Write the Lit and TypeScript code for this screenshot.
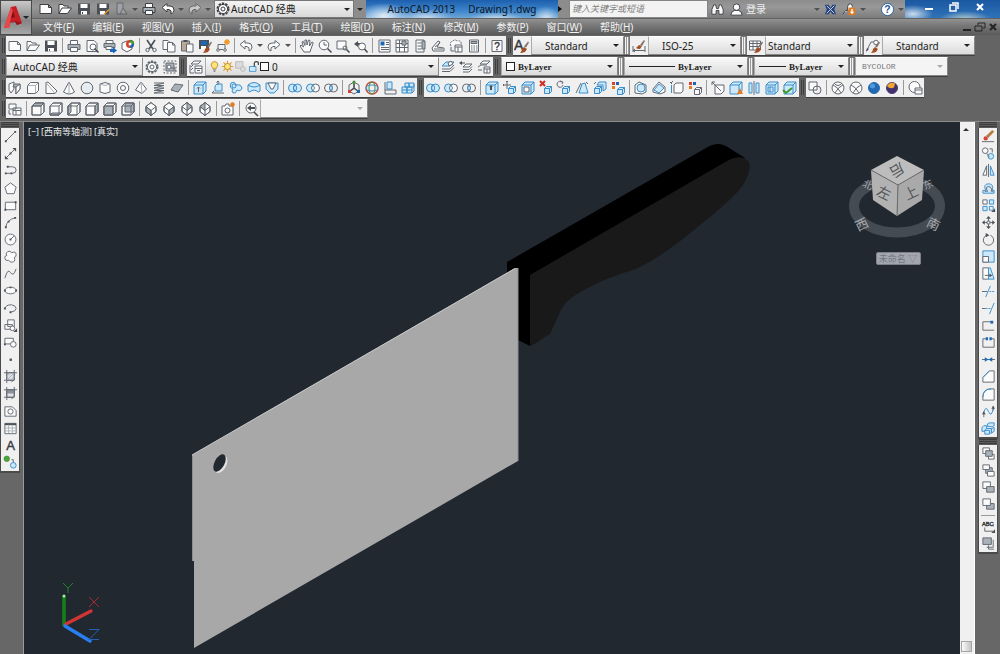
import { LitElement, html, svg, css, nothing } from "lit";
import type { SVGTemplateResult, TemplateResult } from "lit";
import { customElement } from "lit/decorators.js";

/* Shapes reused by several tool glyphs, drawn on a 16 x 16 grid. */
const miniCube = (x: number, y: number, c = "b fb") => svg`
  <g transform="translate(${x} ${y})"><path class=${c} d="M.5 2.5l2-2h5v5l-2 2h-5zM.5 2.5h5v5M5.5 2.5l2-2"/></g>`;
const bigCube = (c = "b fb") => svg`<path class=${c} d="M2 5l3-3h9v9l-3 3H2zM2 5h9v9M11 5l3-3"/>`;
const brush = svg`<path class="br" d="M8 11l2-2 3 2-2 3q-3 1-5 1 2-2 2-4z"/><path class="br2" d="M10 8.500l4-5 1 1-3 5z"/>`;
const gear = svg`<circle cx="8" cy="8" r="5.500" stroke-dasharray="2.300 1.150" stroke-width="2"/><circle class="w" cx="8" cy="8" r="4.600"/><circle cx="8" cy="8" r="2"/>`;
const dots = svg`<path class="red" d="M2 2h3v3H2z"/><path class="blu" d="M6 2h3v3H6z"/><path class="org" d="M2 6h3v3H2z"/>`;
const boxFace = (face: string) => svg`<path class="w" d="M2 5l3-3h9v9l-3 3H2z"/><path class="df" d=${face}/><path d="M2 5l3-3h9v9l-3 3H2zM2 5h9v9M11 5l3-3"/>`;
const isoFace = (face: string) => svg`<path class="w" d="M8 1.500l5 4v5l-5 4-5-4v-5z"/><path class="df" d=${face}/><path d="M8 1.500l5 4v5l-5 4-5-4v-5zM3 5.500l5 4 5-4M8 9.500v5"/>`;
const undo = svg`<path class="w" d="M2 6.500L7 2.500v2.500h3q4 0 4 4 0 3-3 4 1-4-2-4.500H7v2.500z"/>`;
const redo = svg`<path class="w" d="M14 6.500L9 2.500v2.500H6q-4 0-4 4 0 3 3 4-1-4 2-4.500h2v2.500z"/>`;
const lens = svg`<path class="th" d="M10.500 10.500l4 4"/>`;

const ICONS: Record<string, SVGTemplateResult> = {
  new: svg`<path class="w" d="M2 3.500h8.500l3 3v6H2zM10.500 3.500v3h3"/>`,
  open: svg`<path class="w" d="M2 12.500v-9h4l1 1.500h4v2M2 12.500l3-5.500h9.500l-4 5.500z"/>`,
  save: svg`<path class="dk" d="M2 2.500h12v11H2z"/><path class="wf" d="M4.500 3h7v4h-7zM5 10h6v3.500H5z"/><path d="M6.500 11v2"/>`,
  saveas: svg`<path class="dk" d="M2 2.500h12v11H2z"/><path class="wf" d="M4.500 3h7v4h-7zM5 10h5v3.500H5z"/><path class="orl" d="M9 13.500l5-5"/>`,
  plotoff: svg`<path class="df" d="M3 2h6v5l4 6H3zM9 7l-3 6"/>`,
  print: svg`<path class="w" d="M4.500 6.500v-4h7v4"/><path class="df" d="M2 6.500h12v5H2z"/><path class="w" d="M4.500 9.500h7v4h-7z"/>`,
  preview: svg`<path class="w" d="M3 2.500h7l3 3v8H3z"/><circle class="w" cx="9" cy="9" r="3"/>${lens}`,
  publish: svg`<path class="w" d="M4 5.500v-3h7v3"/><path class="df" d="M2 5.500h11v4H2z"/><path class="w" d="M4 8.500h6v3H4z"/><path class="blu" d="M8 11h3V9l4 3.500-4 3V14H8z"/>`,
  print3d: svg`<path class="w" d="M2 5l5-2 5 2v6l-5 3-5-3z"/><circle cx="10" cy="6" r="4" class="red"/><path class="grn" d="M10 2a4 4 0 0 1 4 4h-4z"/><path class="blu" d="M10 6h4a4 4 0 0 1-4 4z"/><circle class="wf" cx="10" cy="6" r="1.500"/>`,
  cut: svg`<path class="th" d="M4 2l6 9M12 2L6 11"/><circle cx="4.500" cy="12" r="1.700"/><circle cx="11.500" cy="12" r="1.700"/>`,
  copy: svg`<path class="w" d="M2 2.500h5l2 2v7H2z"/><path class="w" d="M6.500 4.500h5l2.500 2.500v7H6.500zM11.500 4.500v2.500H14"/>`,
  paste: svg`<path class="tan" d="M2.500 3h8v10h-8z"/><path class="dk" d="M4.500 2h4v2h-4z"/><path class="w" d="M7.500 6h6.500v8H7.500z"/>`,
  match: svg`<path class="dk" d="M2 2h10v9H2z"/><path class="wf" d="M4 8h5v3H4z"/><path class="blu" d="M4 3h6v4H4z"/>${brush}`,
  block: svg`<path d="M3 6.500h7v5M3 6.500v5h5"/><circle cx="3" cy="12" r="1.300" class="w"/><circle cx="10" cy="12" r="1.300" class="w"/><path class="orl" d="M12 1v6M9 4h6M10 2l4 4M14 2l-4 4"/>`,
  undo, redo,
  pan: svg`<path class="w" d="M5 14l-4-6 1-1 2.500 2L3 4l1.200-.7L6 7.500 6 2h1.500L8 7l1.500-5 1.500.5L10.500 8 13 4l1.200.8L12 11l-1 3z"/>`,
  zoom: svg`<circle class="w" cx="7" cy="7" r="4.800"/><path d="M7 4v3h3"/>${lens}`,
  zoomwin: svg`<path class="w" d="M2 3h9v8H2z"/><circle cx="10" cy="10" r="2"/><path class="th" d="M11.500 11.500l3 3"/>`,
  zoomprev: svg`<path class="dk" d="M1 6l4-3v2h3v2H5v2z"/><circle class="w" cx="9" cy="8.500" r="3.500"/><path class="th" d="M11.500 11l3 3.500"/>`,
  props: svg`<path class="w" d="M3 2h11v12H3z"/><path class="blu" d="M4.500 3.500h4v4h-4z"/><path d="M10 4.500h3M10 6.500h3M5 9.500h8M5 11.500h8"/>`,
  center: svg`<path class="w" d="M2 2h12v12H2z"/><path d="M5.500 2v12M10.500 2v12M2 5.500h12M2 9.500h12"/><path class="df" d="M8 3h4v4H8z"/>`,
  palette: svg`<path class="w" d="M4 2h8v12H4z"/><path class="df" d="M10 3h3v8h-3z"/><path d="M5.500 5h4M5.500 8h4M5.500 11h4"/>`,
  sheets: svg`<path class="w" d="M2 10l6-7 2 1-3 5 7 1v3H3z"/><path d="M4 11h9M5 9l5-4"/>`,
  markup: svg`<path class="w" stroke-dasharray="2 1" d="M3 8q-2-4 2-5 2-2 4 0 5-1 4 4"/><path class="w" d="M7 7h7v7H7z"/><path d="M7 9h7M10 9v5M3 9v4h3"/>`,
  calc: svg`<path class="w" d="M3.500 2h9v12h-9z"/><path class="df" d="M5 3.500h6v2H5z"/><path stroke-dasharray="1.500 1" d="M5 8h6.500M5 10h6.500M5 12h6.500"/>`,
  help: svg`<path class="w" d="M3 2.500h10v11H3z"/><text class="t" x="8" y="12" text-anchor="middle">?</text>`,
  tstyle: svg`<text class="t" x="0" y="12" font-size="14">A</text>${brush}`,
  dstyle: svg`<path d="M2 8v6M14 8v6M2 12.500h12M2 12.500l2-1.500M2 12.500L4 14"/><path class="br" d="M6 9l2-2 3 1-2 3q-3 0-4-1z"/><path class="br2" d="M9 7l4-5 1 1-3 5z"/>`,
  tbstyle: svg`<path class="w" d="M1.500 3h11v9h-11z"/><path d="M1.500 5.500h11M5 3v9M9 3v9M1.500 8.500h11"/>${brush}`,
  mstyle: svg`<path d="M1.500 13L6 4h4"/><circle class="w" cx="11" cy="4.500" r="2.300"/><path class="dk" d="M1 14l1-4 2 1z"/>${brush}`,
  gear,
  gearbox: svg`<path class="df" d="M4 4h8v8H4z"/><path stroke-dasharray="2 1.500" d="M2 2h12v12H2z"/><circle class="w" cx="7" cy="8" r="2"/><path d="M9 9h4v4"/>`,
  layers: svg`<path class="w" d="M3 5l3-3h7l-3 3zM3 8l2-2M3 11l2-2"/><path class="w" d="M7 7h7v7H7z"/><path d="M7 9.500h7M9 11.500h3M2 6v8h4"/>`,
  laycur: svg`<path class="b fb" d="M2 7l4-4h8l-4 4z"/><path d="M2 10h8l4-4M2 12.500h8l4-4"/><path class="w" d="M8 4l3-2 2 3-4 2z"/>`,
  layprev: svg`<path class="w" d="M5 8l3-3h6l-3 3zM5 10.500h6l3-3M5 13h6l3-3"/><path class="dk" d="M1 4l3-2v1.500h3v1H4V6z"/>`,
  laystate: svg`<path class="w" d="M4 5l3-3h7l-3 3zM2 8l3-2h6M2 11h4"/><path class="w" d="M8 8h6v6H8z"/><path d="M8 10h6M11 10v4"/>`,
  poly: svg`<path class="w" d="M2 4l5-2v7l-3 4-2-3z"/><path class="df" d="M7 4h6v5l-4 5V7H6z"/><path class="w" d="M9 7l4-3v5l-4 5z"/>`,
  box: svg`<path class="w" d="M2.500 5.500l3-3h8v8l-3 3h-8z"/><path class="ln" d="M2.500 5.500h8v8M10.500 5.500l3-3"/>`,
  wedge: svg`<path class="w" d="M3 2.500l2-.5 9 9-2 2.500H3z"/><path class="ln" d="M3 2.500l9 11"/>`,
  cone: svg`<path class="w" d="M8 2l5.500 10q-5.500 4-11 0z"/><path class="ln" d="M8 2v12"/>`,
  sphere: svg`<circle class="ball" cx="8" cy="8" r="5.800"/>`,
  cyl: svg`<path class="w" d="M3 4q5-3 10 0v8q-5 3-10 0z"/><path class="ln" d="M3 4q5 3 10 0"/>`,
  torus: svg`<circle class="w" cx="8" cy="8" r="5.800"/><circle class="w" cx="8" cy="8" r="2.500"/>`,
  pyramid: svg`<path class="w" d="M8 2l5.500 7L9 13.500 2.500 10z"/><path class="ln" d="M8 2l1 11.500"/>`,
  helix: svg`<path d="M3 3h10L3 5.500h10L3 8h10L3 10.500h10L3 13h10"/>`,
  planar: svg`<path class="df" d="M6 4l8 1-5 7-7-2z"/><path class="ln" d="M4 7l8 1M10 4.500L6 11"/>`,
  extrude: svg`${bigCube()}<path d="M6.500 12V7M5 8.500L6.500 7 8 8.500"/>`,
  presspull: svg`<path class="b fb" d="M5 6l2-2h5v7H5z"/><path d="M2 13h12M4 11l-2 2M8 1v4M6.500 2.500L8 1l1.500 1.500"/>`,
  sweep: svg`<path class="b fb" d="M3 3q4-2 5 2 5-1 6 3-1 4-5 2-1 4-4 3-2-2 0-4-4-1-2-6z"/><circle class="b" cx="6" cy="6" r="2"/>`,
  revolve: svg`<path class="b fb" d="M2 5q6-5 12 0v6q-2 2-3 0-3-2-6 0-1 2-3 0z"/><path class="b" d="M2 5q6 4 12 0"/>`,
  loft: svg`<path class="b fb" d="M2 3h12v6l-4 4H6L2 9z"/><path class="w" d="M4 3h8L9 9H7z"/>`,
  union: svg`<circle class="b fb" cx="5.500" cy="8" r="4"/><circle class="b fb" cx="10.500" cy="8" r="4"/><ellipse class="b" cx="8" cy="8" rx="1.500" ry="3"/>`,
  subtract: svg`<circle class="b fb" cx="5.500" cy="8" r="4"/><circle class="w" cx="10.500" cy="8" r="4"/><path class="b" d="M8 5q3 3 0 6"/>`,
  intersect: svg`<circle cx="5.500" cy="8" r="4"/><circle cx="10.500" cy="8" r="4"/><path class="b fb" d="M8 5q3 3 0 6-3-3 0-6z"/>`,
  gizmove: svg`<path class="th" d="M8 2v6l-5 4M8 8l5 4"/><path d="M3 5l5-3 5 3v6l-5 3-5-3z"/><path class="grn" d="M7 1h2v3H7z"/><path class="red" d="M2 10h3v3H2z"/><path class="blu" d="M11 10h3v3h-3z"/>`,
  gizrot: svg`<circle cx="8" cy="8" r="6" class="rl"/><ellipse cx="8" cy="8" rx="3" ry="6" class="gl"/><ellipse cx="8" cy="8" rx="6" ry="3" class="b"/>`,
  align3d: svg`<path class="b fb" d="M5 2h5v7H5z"/><path d="M3 2v12h11v-4H3"/>`,
  array3d: svg`<path class="b fb" d="M2 7h5v6H2zM7 7h5v6H7zM5 3h4v4H5zM9 3h5v4H9z"/><path class="b" d="M2 10h10M12 13l2-2V4"/>`,
  extface: svg`${bigCube()}<path class="dk" d="M5 7l2-2 2 2H8v3H6V7z"/>`,
  moveface: svg`${miniCube(6, 6)}<path d="M5 1v8M1 5h8M4 2l1-1 1 1M2 4L1 5l1 1"/>`,
  offface: svg`<path class="b fb" d="M2 5l3-3h9v9l-3 3H2z"/><path class="w" d="M4 7h5v5H4z"/><path class="b" d="M2 5h9v9M11 5l3-3"/>`,
  delface: svg`${miniCube(6, 6)}<path class="rl2" d="M2 1l5 5M7 1L2 6"/>`,
  rotface: svg`${miniCube(6, 6)}<path d="M6 2a3 3 0 1 0 1 3M4 1l3 1-1 2"/>`,
  tapface: svg`<path class="b fb" d="M5 13L8 4l3-1 3 10z"/><path d="M2 13L7 3M12 2l2 2"/>`,
  copyface: svg`${miniCube(2, 6)}<path class="b fb" d="M5 5l2-3h7v7l-3 2V5z"/><path d="M2 4l2-2"/>`,
  colface: svg`${dots}${miniCube(7, 7)}`,
  imprint: svg`<path class="w" d="M2 5l4-3 7 3v7l-4 2-7-1z"/><circle class="b fb" cx="8" cy="8" r="4"/>`,
  shell: svg`<path class="w" d="M2 9l6-7 6 5v5l-5 2-7-2z"/><path class="b fb" d="M3 10l5-6 5 4-5 5z"/>`,
  copyedge: svg`<path class="w" d="M5 5l2-2h7v8l-2 2H5z"/><path class="b" d="M2.500 5v8"/><path d="M1 2l2 2M4 1L2 3"/>`,
  coledge: svg`${dots}${miniCube(7, 7, "w")}`,
  clean: svg`<path class="w" d="M5 5h9v6l-3 3H5z"/><path d="M2 2l9 9M2 5V2h3"/>`,
  check: svg`${bigCube()}<path class="org" d="M12 8l3 6H9z"/>`,
  separate: svg`<path class="b fb" d="M3 3h3v10H3zM10 3h3v10h-3z"/><path d="M8 1v14"/>`,
  shell2: svg`${bigCube()}<path class="b" d="M4 7h5v5H4zM6 7v5"/>`,
  valid: svg`${bigCube()}<path class="gl2" d="M1 10l3 3 6-5"/>`,
  wire2d: svg`<path class="w" d="M2 2h8v8H2z"/><circle cx="10" cy="10" r="4"/>`,
  wire3d: svg`<circle class="w" cx="8" cy="8" r="6"/><path d="M3 5q5 2 8 8M13 5q-5 2-8 8M4 3q4 5 8 0"/>`,
  hidden: svg`<circle class="w" cx="8" cy="8" r="6"/><path d="M3 5q5 2 8 8M13 5q-5 2-8 8"/>`,
  realistic: svg`<circle class="bb" cx="8" cy="8" r="5.500"/><circle class="bh" cx="6.500" cy="6" r="2.500"/>`,
  conceptual: svg`<circle class="pb" cx="8" cy="8" r="5.500"/><path class="oy" d="M3 6a5.500 5.500 0 0 1 8-2.500l-1 4q-4 2-7-1.500z"/>`,
  vsmgr: svg`<circle class="w" cx="7.500" cy="7" r="5.500"/><path class="w" d="M8 8h7v6H8z"/><path d="M8 10h7"/>`,
  named: svg`<path class="w" d="M2 3h7v5H2zM6 7h8v7H6z"/><path d="M6 9.500h8M9 9.500V14M2 9v4h2"/>`,
  vtop: boxFace("M2 5l3-3h9l-3 3z"),
  vbottom: boxFace("M2 14l2-2h9l-2 2z"),
  vleft: boxFace("M2 5l3-3v9l-3 3z"),
  vright: boxFace("M11 5l3-3v9l-3 3z"),
  vfront: boxFace("M2 5h9v9H2z"),
  vback: boxFace("M5 2h9v9H5z"),
  sw: isoFace("M3 5.500l5 4v5l-5-4z"),
  se: isoFace("M8 9.500l5-4v5l-5 4z"),
  ne: isoFace("M8 1.500l5 4-5 4z"),
  nw: isoFace("M8 1.500l-5 4 5 4z"),
  camera: svg`<path class="w" d="M2 5h3l1-2h3v2h4v9H2z"/><circle class="w" cx="7.500" cy="9.500" r="2.500"/><circle class="org" cx="12.500" cy="3.500" r="2.200"/>`,
  vpprev: svg`<circle class="w" cx="8" cy="7" r="5"/><path class="dk" d="M4 7l4-3v2h4v2H8v2z"/><path class="th" d="M11 11l4 4"/>`,
  line: svg`<path d="M3 13L13 3"/><path class="dk" d="M2 12h2v2H2zM12 2h2v2h-2z"/>`,
  xline: svg`<path d="M3 13L13 3"/><path class="dk" d="M2 14v-4l4 4zM14 2v4l-4-4zM7 7h2v2H7z"/>`,
  pline: svg`<path d="M5 4h5q4 0 4 3.500T10 11H3"/><path class="dk" d="M2 10h2v2H2zM8 10h2v2H8zM4 3h2v2H4z"/>`,
  polygon: svg`<path class="w" d="M8 2l6 4.500L11.800 13.500H4.200L2 6.500z"/>`,
  rect: svg`<path class="w" d="M2.500 4.500h11v8h-11z"/><path class="dk" d="M1.500 11.500h2v2h-2zM12.500 3.500h2v2h-2z"/>`,
  arc: svg`<path d="M3 13Q4 5 13 3"/><path class="dk" d="M2 12h2v2H2zM12 2h2v2h-2zM5 6h2v2H5z"/>`,
  circle: svg`<circle class="w" cx="8" cy="8" r="5.800"/><path d="M8 8l4-4"/><path class="dk" d="M7 7h2v2H7z"/>`,
  cloud: svg`<path class="w" d="M5 3q3-2 4 1 5-2 5 2 0 3-2 3 2 5-3 5-2 0-3-2-4 1-4-3 0-2 2-2-2-3 1-4z"/>`,
  spline: svg`<path d="M2 13Q5 2 8 7t6-4"/>`,
  ellipse: svg`<ellipse class="w" cx="8" cy="8" rx="6" ry="3.500"/><path class="dk" d="M1 7h2v2H1zM13 7h2v2h-2zM7 4h2v1.500H7z"/>`,
  earc: svg`<path d="M2 8q1-4 7-4 5 1 5 4 0 3-6 4"/><path class="dk" d="M1 7h2v2H1zM7 11h2v2H7z"/>`,
  insert: svg`<path class="w" d="M5 2h7v7H5zM2 7h8v5H2z"/><circle class="w" cx="10" cy="11" r="2.500"/><path class="dk" d="M15 11v4h-4z"/>`,
  mkblock: svg`<path class="w" d="M2 3.500h9v6H2z"/><circle class="w" cx="11" cy="10" r="3"/><path class="dk" d="M1 9h2v2H1z"/>`,
  point: svg`<path class="dk" d="M7 7h2.500v2.500H7z"/>`,
  hatch: svg`<path class="pale" d="M4 4h8v8H4z"/><path d="M4 1v14M12 1v10L9 14M1 4h14M1 12h10"/><path class="ln" d="M4 8l4-4M4 12l8-8M8 12l4-4"/>`,
  gradient: svg`<path class="pale" d="M4 4h8v8H4z"/><path class="dk2" d="M4 4h8v4H4z"/><path d="M4 1v14M12 1v10L9 14M1 4h14M1 12h10"/>`,
  region: svg`<path class="w" d="M2 3h8l4 4v6H2z"/><circle class="w" cx="8" cy="8" r="2.800"/>`,
  table: svg`<path class="w" d="M2 2.500h12v11H2z"/><path class="dk" d="M2 2.500h12v2H2z"/><path class="ln" d="M6 4v9M10 4v9M2 7.500h12M2 10.500h12"/>`,
  mtext: svg`<text class="t" x="8" y="13" font-size="14" text-anchor="middle">A</text>`,
  addsel: svg`<circle class="grn" cx="4" cy="4" r="3"/><circle class="b fb" cx="11" cy="11" r="3"/><path d="M9 5h2v3"/>`,
  erase: svg`<path class="tanl" d="M7 8l6-6"/><path class="w" d="M6 7l2 2"/><circle class="red" cx="5" cy="10" r="2.300"/><path d="M1 13.500h13"/>`,
  copyobj: svg`<circle class="w" cx="4.500" cy="5" r="3"/><circle class="b fb" cx="10.500" cy="11" r="3"/><path d="M9 3h3v4M6 8l3 4"/>`,
  mirror: svg`<path class="w" d="M6 3v10H2z"/><path class="b fb" d="M10 3v10h4z"/><path d="M8 1v14"/>`,
  offset: svg`<path class="b fb" d="M2 13v-3h3Q2 3 8 3t4 7h2v3z"/><path d="M4 11h3Q4 6 8 6t3 5h2"/>`,
  array: svg`<path class="w" d="M2 2h4.500v4.500H2z"/><path class="b fb" d="M9 2h4.500v4.500H9zM2 9h4.500v4.500H2z"/><path class="b" d="M9 9h4v4H9z"/><path class="dk" d="M15 11v4h-4z"/>`,
  move: svg`<path d="M8 3v10M3 8h10"/><path class="dk" d="M8 1l2.500 3h-5zM8 15l2.500-3h-5zM1 8l3-2.500v5zM15 8l-3-2.500v5z"/><path class="w" d="M6.500 6.500h3v3h-3z"/>`,
  rotate: svg`<path d="M10 3.500a5.500 5.500 0 1 1-4 0"/><path class="dk" d="M5 1l4 2.500-4 2z"/>`,
  scale: svg`<path class="b fb" d="M2 2h12v12H2z"/><path class="w" d="M2 8h6v6H2z"/>`,
  stretch: svg`<path class="w" d="M2 2h6v12H2z"/><path class="b fb" d="M8 2h2l4 12H8z"/><path d="M4 10h6"/><path class="dk" d="M9 8l3 2-3 2z"/>`,
  trim: svg`<path d="M1 8h6"/><path class="b" d="M5 14l5-12"/><path class="b" stroke-dasharray="2 1" d="M9 8h6"/>`,
  extend: svg`<path d="M1 8h4"/><path class="b" d="M9 14l5-12"/><path stroke-dasharray="2 1" class="b" d="M5 8h6"/>`,
  breakpt: svg`<path d="M13 4H2v9h12"/><path class="blu" d="M10 3h3v3h-3z"/>`,
  breakob: svg`<path d="M5 4H2v9h12V4h-3"/><path class="blu" d="M5 2.500h2.500v3H5zM9 2.500h2.500v3H9z"/>`,
  join: svg`<path d="M1 8h14"/><path class="blu" d="M4 5.500L8 8l-4 2.500zM12 5.500L8 8l4 2.500z"/>`,
  chamfer: svg`<path class="w" d="M2 14V9l7-7h5v12z"/><path class="b" d="M2 9l7-7"/>`,
  fillet: svg`<path class="w" d="M2 14v-3q0-9 9-9h3v12z"/><path class="b" d="M2 11q0-9 9-9"/>`,
  blend: svg`<path class="b" d="M3 9q2-8 5-1t5-3"/><path d="M3 14V8M13 7V2"/><path class="dk" d="M1 11l2-3 2 3zM11 5l2-3 2 3z"/>`,
  explode: svg`<path class="b fb" d="M7 3l2-1h5v3l-2 1H7zM1 7l2-2h3v4l-2 2H1zM11 8l3-1v4l-3 2z"/><path class="b fb" d="M4 10l2-2h5v4l-2 2H4zM4 10h5v4"/>`,
  front: svg`<path class="w" d="M2 2h7v6H2zM8 9h6v5H8z"/><path class="df" d="M5 5h7v6H5z"/>`,
  back: svg`<path class="df" d="M5 5h7v6H5z"/><path class="w" d="M2 2h7v5H2zM7 9h7v5H7z"/>`,
  above: svg`<path class="w" d="M2 2h8v7H2z"/><path class="df" d="M6 7h8v6H6z"/>`,
  under: svg`<path class="df" d="M6 7h8v6H6z"/><path class="w" d="M2 2h8v7H2z"/>`,
  textfront: svg`<text class="t" x="1" y="7" font-size="6">ABC</text><path d="M4 9v4h9M13 5v3"/><path class="dk" d="M15 11v4h-4z"/>`,
  hatchback: svg`<path class="df" d="M2 2h9v7H2z"/><path d="M13 4v8H6M8 10v4h6"/>`,
  bino: svg`<path class="w" d="M2 13V8l2-5h2l1 4h2l1-4h2l2 5v5H9.500V9h-3v4z"/>`,
  user: svg`<circle class="w" cx="8" cy="5.500" r="3.500"/><path class="w" d="M2 14q0-4 4-5h4q4 1 4 5z"/>`,
  exch: svg`<path class="nv" d="M2 3h4l2 3 2-3h4l-2 5 2 5h-4L8 10l-2 3H2l2-5z"/><path class="wl" d="M4 4l8 8M12 4l-8 8"/>`,
  a360: svg`<path class="w" d="M1 13l3-4h2V5q0-3 3-3 2 0 2 3"/><path class="org" d="M7 6h7v8H7z"/><path class="wf" d="M10 7.500h1.500v3H13L10.700 13 8.500 10.500H10z"/>`,
  helpq: svg`<circle class="qb" cx="8" cy="8" r="6.500"/><text class="tq" x="8" y="12" text-anchor="middle">?</text>`,
  bulb: svg`<path class="yel" d="M8 2a4 4 0 0 1 2 7.500V11H6V9.500A4 4 0 0 1 8 2z"/><path d="M6.500 12.500h3M7 14h2"/>`,
  sun: svg`<path class="orl" d="M8 1v14M1 8h14M3 3l10 10M13 3L3 13"/><circle class="yel" cx="8" cy="8" r="3.800"/>`,
  vpfrz: svg`<path class="faint" d="M2 2h9v8H2z"/><circle class="faint" cx="11" cy="11" r="3"/>`,
  lock: svg`<path class="b fb" d="M3 8h8v6H3z"/><path class="th2" d="M9 8V4q0-2 2.500-2T14 4v2"/>`,
};

type Item = string;
const DRAW: Item[] = ["line","xline","pline","polygon","rect","arc","circle","cloud","spline","ellipse","earc","insert","mkblock","point","hatch","gradient","region","table","mtext","addsel"];
const MODIFY: Item[] = ["erase","copyobj","mirror","offset","array","move","rotate","scale","stretch","trim","extend","breakpt","breakob","join","chamfer","fillet","blend","explode"];
const ORDER: Item[] = ["front","back","above","under","|","textfront","hatchback"];
const STANDARD: Item[] = ["new","open","save","|","print","preview","publish","print3d","|","cut","copy","paste","match","block","|","undo","v","redo","v","|","pan","zoom","zoomwin","zoomprev","|","props","center","palette","sheets","markup","calc","|","help"];
const MODELING: Item[] = ["poly","box","wedge","cone","sphere","cyl","torus","pyramid","helix","planar","|","extrude","presspull","sweep","revolve","loft","|","union","subtract","intersect","|","gizmove","gizrot","align3d","array3d"];
const SOLIDS: Item[] = ["union","subtract","intersect","|","extface","moveface","offface","delface","rotface","tapface","copyface","colface","|","imprint","shell","copyedge","coledge","|","clean","check","separate","shell2","valid"];
const VISUAL: Item[] = ["wire2d","|","wire3d","hidden","realistic","conceptual","|","vsmgr"];
const VIEWS: Item[] = ["named","|","vtop","vbottom","vleft","vright","vfront","vback","|","sw","se","ne","nw","|","camera","|","vpprev"];
const MENUS = [["文件","F"],["编辑","E"],["视图","V"],["插入","I"],["格式","O"],["工具","T"],["绘图","D"],["标注","N"],["修改","M"],["参数","P"],["窗口","W"],["帮助","H"]];

@customElement("app-root")
export class AppRoot extends LitElement {
  static styles = css`
    :host { display: block; font: 10px/14px "Noto Sans", "Noto Sans CJK SC", sans-serif; color: #1c1c1c; }
    * { box-sizing: border-box; }
    button, select, input { font: inherit; color: inherit; margin: 0; padding: 0; border: 0; background: none; border-radius: 0; }
    .app { display: flex; flex-direction: column; height: 100vh; background: #676767; overflow: hidden; }
    svg { display: block; }
    .ico { width: 16px; height: 16px; fill: none; stroke: #626870; stroke-width: 1; }
    .ico .w { fill: #fbfbfc; }
    .ico .df { fill: #a9b1b9; }
    .ico .pale { fill: #dfe2e5; }
    .ico .dk { fill: #4b5057; stroke: none; }
    .ico .dk2 { fill: #8a9198; stroke: none; }
    .ico .wf { fill: #fff; stroke: none; }
    .ico .b { stroke: #3a8ecb; }
    .ico .fb { fill: #cde8f8; }
    .ico .ln { stroke: #aab0b6; fill: none; }
    .ico .th { stroke: #4a4f55; stroke-width: 1.6; }
    .ico .th2 { stroke: #3f444a; stroke-width: 1.5; }
    .ico .red { fill: #d9412f; stroke: none; }
    .ico .blu { fill: #1a67b8; stroke: none; }
    .ico .grn { fill: #48a63a; stroke: #38752f; stroke-width: .5; }
    .ico .org { fill: #e57b1e; stroke: none; }
    .ico .orl { stroke: #ee9a2c; stroke-width: 1.3; }
    .ico .yel { fill: #ffe477; stroke: #ad8226; }
    .ico .br { fill: #a04f22; stroke: none; }
    .ico .br2 { fill: #84736a; stroke: none; }
    .ico .tan { fill: #b9a893; }
    .ico .tanl { stroke: #b67a3c; stroke-width: 3; }
    .ico .rl { stroke: #c9473b; stroke-width: 1.4; }
    .ico .rl2 { stroke: #cf2d22; stroke-width: 2; }
    .ico .gl { stroke: #3a9345; }
    .ico .gl2 { stroke: #3a9a2f; stroke-width: 2; }
    .ico .ball { fill: #e7ecf2; }
    .ico .bb { fill: #2069b4; stroke: #2c6ca8; }
    .ico .bh { fill: #4f9ade; stroke: none; }
    .ico .pb { fill: #443070; stroke: #4a3c6a; }
    .ico .oy { fill: #f2a72e; stroke: none; }
    .ico .nv { fill: #24437f; stroke: none; }
    .ico .wl { stroke: #c8d8f0; }
    .ico .qb { fill: #fff; stroke: #2c5e9c; }
    .ico .faint { fill: #dcdcdc; stroke: #b5b5b5; }
    .ico .t { fill: #34383d; stroke: #34383d; stroke-width: .4; font-family: "Liberation Sans", sans-serif; }
    .ico .tq { fill: #1f55a0; stroke: none; font: bold 11px "Liberation Sans", sans-serif; }

    .head { display: grid; grid-template-columns: 32px 1fr; flex: none; }
    .logo { background: linear-gradient(#c9c9c9, #858585 60%, #a7a7a7); border: 1px solid #4a4a4a; display: flex; align-items: center; }
    .logo svg { width: 22px; height: 30px; }
    .arrow { width: 0; height: 0; border: 3px solid transparent; border-top: 3px solid #222; border-bottom: 0; flex: none; }
    .arrow.side { border: 3px solid transparent; border-left: 4px solid #111; border-right: 0; }
    .arrow.dim { border-top-color: #4f4f4f; }
    .title { display: flex; height: 19px; background: linear-gradient(#8c8c8c, #989898 40%, #7c7c7c); align-items: stretch; border-bottom: 1px solid #626262; }
    .qat { display: flex; padding: 0 2px 0 4px; align-items: center; }
    .q { width: 19px; display: grid; place-items: center; flex: none; }
    .q.low { opacity: .5; }
    .qv { width: 8px; display: grid; place-items: center; }
    .title .ico { stroke: #3c3f43; }
    .work { width: 140px; display: flex; align-items: center; background: linear-gradient(#f4f4f4, #d9d9d9); border: 1px solid #777; padding-right: 3px; }
    .work select, .combo select { appearance: none; flex: 1; min-width: 0; height: 100%; outline: 0; font-family: "Noto Sans", "Noto Sans CJK SC", sans-serif; }
    .more { width: 12px; display: grid; place-items: center; background: #8c8c8c; }
    .caption { flex: 1; display: flex; justify-content: center; align-items: center; gap: 13px; color: #10151c; white-space: nowrap; overflow: hidden;
      background: radial-gradient(ellipse 26px 13px at 18px 16px, #ffffffd0, transparent), radial-gradient(ellipse 26px 9px at 60px 18px, #f4f8ffb0, transparent), radial-gradient(ellipse 28px 8px at 130px 20px, #ffffffc0, transparent), radial-gradient(ellipse 14px 12px at 180px 18px, #ffffffb0, transparent), linear-gradient(#1d5fae, #3d86cc 60%, #6ea5d6); }
    .expand { width: 11px; display: grid; place-items: center; background: #8c8c8c; }
    .search { width: 139px; background: #f3f3f3; border: 1px solid #858585; padding: 0 2px; font-style: italic; outline: 0; font-size: 9px; }
    .search::placeholder { color: #7e7e7e; opacity: 1; }
    .info { width: 197px; display: flex; align-items: center; }
    .info .ico { width: 15px; height: 15px; }
    .login { color: #eee; flex: 1; text-align: left; }
    .help { margin-left: 11px; }
    .wins { width: 95px; display: flex; justify-content: space-between; align-items: center; padding: 0 8px 4px 11px;
      background: radial-gradient(ellipse 20px 9px at 8px 14px, #ffffffc0, transparent), radial-gradient(ellipse 26px 8px at 60px 19px, #e8f0d8b0, transparent), linear-gradient(#1b58a2, #2e73b8); }
    .wins .ico, .mdi .ico { width: 12px; height: 12px; stroke: #fff; stroke-width: 2; }
    .wins button { width: 25px; display: grid; place-items: center; }
    .menubar { display: flex; align-items: center; height: 16px; background: linear-gradient(#929292, #787878 40%, #5a5a5a); padding: 0 1px 0 11px; }
    .menus { display: flex; gap: 18px; flex: 1; }
    .menus button { color: #f2f2f2; white-space: nowrap; line-height: 14px; }
    .mdi { display: flex; gap: 1px; }
    .mdi .ico { stroke: #242424; }

    .bars { display: flex; flex-direction: column; gap: 2px; padding: 1px 0 3px; flex: none; border-bottom: 1px solid #8d8d8d; background: #646464; }
    .row { display: flex; height: 19px; }
    .grip { flex: none; width: 6px; background: repeating-linear-gradient(90deg, #3f3f3f 0 1px, #636363 1px 2px); background-clip: content-box; padding: 2px 1px; }
    .grip.g7 { width: 7px; }
    .grip.g8 { width: 8px; padding: 2px; }
    .grip.light { background: repeating-linear-gradient(90deg, #f5f5f5 0 1px, #9a9a9a 1px 2px); width: 6px; background-clip: border-box; border: 1px solid #777; }
    .bar { display: flex; flex: none; background: #f0f0f0; box-shadow: 0 1px 0 #3f3f3f; }
    .tb { width: 18px; display: grid; place-items: center; flex: none; }
    .dd { width: 10px; display: grid; place-items: center; }
    .sep { width: 5px; flex: none; display: flex; justify-content: center; }
    .sep::before { content: ""; width: 1px; margin: 2px 0; background: #999; }
    .combo { display: flex; align-items: center; gap: 3px; padding: 0 4px 0 6px; background: linear-gradient(#f8f8f8, #dcdcdc); border: 1px solid #9a9a9a; border-color: #fff #888 #888 #aaa; }
    .c93 { width: 93px; } .c137 { width: 137px; } .c234 { width: 234px; } .c117 { width: 117px; } .c124 { width: 124px; } .c95 { width: 95px; } .c108 { width: 108px; }
    .combo.in { padding-left: 13px; }
    .combo.tight { padding-left: 2px; }
    .combo.off { background: #f4f4f4; color: #777; }
    .combo.off .arrow { border-top-color: #aaa; }
    .combo.serif { padding-left: 4px; }
    .combo.serif select { font: bold 9px/14px "Liberation Serif", serif; }
    .combo.mono select { font: 8px/14px "Liberation Mono", monospace; }
    .combo .ico { width: 13px; height: 13px; margin-right: -3px; flex: none; }
    .swatch { width: 9px; height: 9px; border: 1px solid #222; background: #fff; flex: none; }
    .rule { height: 1px; background: #222; flex: none; width: 46px; }
    .rule.short { width: 27px; }

    .work-area { flex: 1; display: flex; min-height: 0; }
    .side { width: 24px; flex: none; padding: 0 4px 0 1px; border-right: 1px solid #9a9a9a; }
    .vgrip { height: 6px; background: repeating-linear-gradient(#3c3c3c 0 1px, #5b5b5b 1px 2px); margin: 0; }
    .vbar { display: flex; flex-direction: column; background: #f0f0f0; box-shadow: 0 1px 0 1px #4a4a4a; }
    .draw { height: 343px; } .modify { height: 309px; margin-bottom: 2px; } .order { height: 107px; }
    .vbar .tb { flex: 1; width: auto; min-height: 0; }
    .vbar .ico { width: 15px; height: 15px; }
    .vbar .sep { width: auto; height: 5px; flex: none; align-items: center; }
    .vbar .sep::before { width: 14px; height: 1px; margin: 0; }
    .side.right { padding: 0 3px 0 4px; width: 25px; border: 0; }
    .canvas { flex: 1; position: relative; background: #212830; overflow: hidden; min-width: 0; }
    .scene { width: 100%; height: 100%; }
    .vp { position: absolute; left: 4px; top: 3px; color: #e8e8e8; display: flex; gap: 2px; font-size: 9px; }
    .cube { position: absolute; right: 9px; top: 28px; width: 106px; display: flex; flex-direction: column; align-items: center; }
    .cube svg { width: 106px; height: 92px; }
    .cube text { font-family: "Noto Sans CJK SC", sans-serif; }
    .wcs { margin-top: 10px; width: 45px; height: 13px; border: 1px solid #7d8089; border-radius: 2px; background: #a3a6ae; color: #737680; font-size: 9px; line-height: 10px; white-space: nowrap; }
    .ucs { position: absolute; left: 34px; bottom: 8px; width: 46px; height: 66px; }
    .scroll { width: 15px; flex: none; background: #f0f0f0; display: flex; flex-direction: column; justify-content: space-between; align-items: center; padding: 4px 2px 2px 0; border-right: 1px solid #fff; }
    .scroll .up { width: 12px; height: 6px; display: grid; place-items: center; }
    .scroll .arrow { border: 3px solid transparent; border-bottom: 3px solid #333; border-top: 0; }
    .thumb { width: 11px; height: 11px; background: linear-gradient(90deg, #fafafa, #c4c4c8); border: 1px solid #a5a5a5; }
  `;

  private icon(name: string): TemplateResult {
    return html`<svg class="ico" viewBox="0 0 16 16" aria-hidden="true">${ICONS[name]}</svg>`;
  }

  private items(list: Item[]) {
    return list.map((n) =>
      n === "|" ? html`<span class="sep"></span>`
      : n === "v" ? html`<button class="dd" aria-label="more"><span class="arrow dim"></span></button>`
      : html`<button class="tb" aria-label=${n}>${this.icon(n)}</button>`);
  }

  private combo(cls: string, label: string, value: string, lead: unknown = nothing) {
    return html`<label class="combo ${cls}">${lead}<select aria-label=${label}><option>${value}</option></select><span class="arrow"></span></label>`;
  }

  private quick(name: string, low = false) {
    return html`<button class="q ${low ? "low" : ""}" aria-label=${name}>${this.icon(name)}</button>`;
  }

  private header() {
    const v = html`<button class="qv" aria-label="more"><span class="arrow dim"></span></button>`;
    return html`
      <header class="head">
        <button class="logo" aria-label="application menu">
          <svg viewBox="0 0 22 30"><path d="M3 25L10 4l5-1 6 17-5 2-2-4-5 2-1 5z" fill="#c41f25"/><path d="M3 25L10 4l2 4-3 11-1 6z" fill="#e8484a"/><path d="M10 15l2-7 2 6z" fill="#801216"/><path d="M9 20l5-2 7 2-5 2-2-3z" fill="#94161b"/></svg>
          <span class="arrow"></span>
        </button>
        <div>
          <div class="title">
            <div class="qat">
              ${this.quick("new")}${this.quick("open")}${this.quick("save")}${this.quick("saveas")}${this.quick("plotoff", true)}${v}
              ${this.quick("print")}${this.quick("undo")}${v}${this.quick("redo", true)}${v}
            </div>
            <label class="work">${this.icon("gear")}<select aria-label="workspace"><option>AutoCAD 经典</option></select><span class="arrow"></span></label>
            <button class="more" aria-label="customize"><span class="arrow"></span></button>
            <div class="caption"><span>AutoCAD 2013</span><span>Drawing1.dwg</span></div>
            <button class="expand" aria-label="expand"><span class="arrow side"></span></button>
            <input class="search" aria-label="search" placeholder="键入关键字或短语" />
            <div class="info">
              ${this.quick("bino")}${this.quick("user")}<button class="login">登录</button>${v}
              ${this.quick("exch")}${this.quick("a360")}${v}
              <button class="q help" aria-label="help">${this.icon("helpq")}</button>${v}
            </div>
            <div class="wins">
              <button aria-label="minimize"><svg class="ico" viewBox="0 0 12 12"><path d="M2 8h8"/></svg></button>
              <button aria-label="restore"><svg class="ico" viewBox="0 0 12 12"><path d="M4 2h6v6M2 4h6v6H2z" stroke-width="1.500"/></svg></button>
              <button aria-label="close"><svg class="ico" viewBox="0 0 12 12"><path d="M3 3l6 6M9 3l-6 6"/></svg></button>
            </div>
          </div>
          <div class="menubar">
            <nav class="menus">${MENUS.map(([t, k]) => html`<button>${t}(<u>${k}</u>)</button>`)}</nav>
            <div class="mdi">
              <button aria-label="minimize drawing"><svg class="ico" viewBox="0 0 12 12"><path d="M2 9h8"/></svg></button>
              <button aria-label="restore drawing"><svg class="ico" viewBox="0 0 12 12"><path d="M4 4V2h7v5H9M1 5h7v5H1z" stroke-width="1"/></svg></button>
              <button aria-label="close drawing"><svg class="ico" viewBox="0 0 12 12"><path d="M3 3l6 6M9 3l-6 6"/></svg></button>
            </div>
          </div>
        </div>
      </header>`;
  }

  private bars() {
    const grip = html`<span class="grip"></span>`;
    const light = html`<span class="grip light"></span>`;
    const layerLead = html`${["bulb", "sun", "vpfrz", "lock"].map((n) => this.icon(n))}<span class="swatch"></span>`;
    return html`
      <div class="bars">
        <div class="row">
          ${grip}<div class="bar">${this.items(STANDARD)}</div><span class="grip g7"></span>
          <div class="bar">
            ${this.items(["tstyle"])}${this.combo("c93 in", "text style", "Standard")}${light}
            ${this.items(["dstyle"])}${this.combo("c93 in", "dimension style", "ISO-25")}${light}
            ${this.items(["tbstyle"])}${this.combo("c93 tight", "table style", "Standard")}${light}
            ${this.items(["mstyle"])}${this.combo("c93 in", "leader style", "Standard")}
          </div>
        </div>
        <div class="row">
          ${grip}<div class="bar">${this.combo("c137", "workspaces", "AutoCAD 经典")}${this.items(["gear", "gearbox"])}</div><span class="grip g8"></span>
          <div class="bar">${this.items(["layers"])}${this.combo("c234 tight", "layer", "0", layerLead)}${this.items(["laycur", "layprev", "laystate"])}</div><span class="grip g8"></span>
          <div class="bar">
            ${this.combo("c117 serif", "color", "ByLayer", html`<span class="swatch"></span>`)}${light}
            ${this.combo("c124 serif", "linetype", "ByLayer", html`<span class="rule"></span>`)}${light}
            ${this.combo("c95 serif", "lineweight", "ByLayer", html`<span class="rule short"></span>`)}${light}
            ${this.combo("c93 mono off", "plot style", "BYCOLOR")}
          </div>
        </div>
        <div class="row">
          ${grip}<div class="bar">${this.items(MODELING)}</div><span class="grip g7"></span>
          <div class="bar">${this.items(SOLIDS)}</div><span class="grip g7"></span>
          <div class="bar">${this.items(VISUAL)}</div>
        </div>
        <div class="row">
          ${grip}<div class="bar">${this.items(VIEWS)}${this.combo("c108 off", "view", "")}</div>
        </div>
      </div>`;
  }

  private canvas() {
    return html`
      <main class="canvas">
        <svg class="scene" viewBox="24 122 936 532" preserveAspectRatio="xMinYMin slice" role="img" aria-label="cleaver model">
          <path fill="#000" d="M507 262L706 148Q717 141 726 146L745 158 560 275 540 340 530 346 518 340V300H507z"/>
          <path fill="#191919" d="M530 275L727 161Q742 153 749 162 752 172 741 188 728 203 700 225 660 259 633 270 603 279 588 288 565 299 560 312L550 334 530 346z"/>
          <path fill="#a8a8a8" d="M192 455L515 268H518V461L194 648V561H192z"/>
          <path stroke="#c9c9c9" fill="none" d="M192 455L515 268.500"/>
          <path stroke="#8e8e8e" fill="none" d="M518 268V461M192.500 456V561"/>
          <ellipse cx="220.500" cy="464" rx="6" ry="9.500" transform="rotate(28 220.500 464)" fill="#e2e2e2"/>
          <ellipse cx="219.500" cy="463" rx="5" ry="9.500" transform="rotate(28 219.500 463)" fill="#212830"/>
        </svg>
        <div class="vp"><button>[−]</button><button>[西南等轴测]</button><button>[真实]</button></div>
        <div class="cube">
          <svg viewBox="845 150 106 92" role="img" aria-label="view cube">
            <ellipse cx="897" cy="206" rx="43" ry="26.500" fill="none" stroke="#454b53" stroke-width="10"/>
            <g fill="#a5a8ac" font-size="13">
              <text x="863" y="188" font-size="10" transform="rotate(24 867 184)">北</text>
              <text x="923" y="188" font-size="10" transform="rotate(-24 928 184)">东</text>
              <text x="855" y="229" transform="rotate(-26 862 224)">西</text>
              <text x="927" y="229" transform="rotate(26 934 224)">南</text>
            </g>
            <path fill="#bdbdbd" d="M897 156L924 170 898 185 871 170z"/>
            <path fill="#b2b2b2" d="M871 170L898 185 897 216 873 200z"/>
            <path fill="#a9a9a9" d="M924 170L898 185 897 216 922 200z"/>
            <path fill="none" stroke="#6c6c6c" d="M871 170L898 185 924 170M898 185L897 216"/>
            <g fill="#53565a" font-size="14">
              <text x="890" y="175" transform="rotate(150 897 170)">后</text>
              <text x="877" y="198" transform="rotate(26 884 193)">左</text>
              <text x="904" y="198" transform="rotate(-26 911 193)">上</text>
            </g>
          </svg>
          <button class="wcs">未命名 ▽</button>
        </div>
        <svg class="ucs" viewBox="58 580 46 66" role="img" aria-label="UCS axes">
          <g fill="none" stroke-linecap="round" stroke-width="3.500">
            <path stroke="#158019" d="M64 625V597"/><path stroke="#d13434" d="M66 624L91 611"/><path stroke="#2a7ff0" d="M65 626L90 641"/>
          </g>
          <circle cx="64" cy="596" r="1.500" fill="#9df59d"/>
          <g fill="none"><path stroke="#1c8527" d="M63 583l5 5 5-5M68 588v5"/><path stroke="#a92a31" d="M89 597l10 10M99 597l-10 10"/><path stroke="#2262b5" d="M89 629.500h10l-10 10h10"/></g>
        </svg>
      </main>
      <div class="scroll"><button class="up" aria-label="scroll up"><span class="arrow"></span></button><button class="thumb" aria-label="scroll"></button></div>`;
  }

  render() {
    return html`
      <div class="app">
        ${this.header()}
        ${this.bars()}
        <div class="work-area">
          <aside class="side"><div class="vgrip"></div><div class="vbar draw">${this.items(DRAW)}</div></aside>
          ${this.canvas()}
          <aside class="side right">
            <div class="vgrip"></div><div class="vbar modify">${this.items(MODIFY)}</div>
            <div class="vgrip"></div><div class="vbar order">${this.items(ORDER)}</div>
          </aside>
        </div>
      </div>`;
  }
}
